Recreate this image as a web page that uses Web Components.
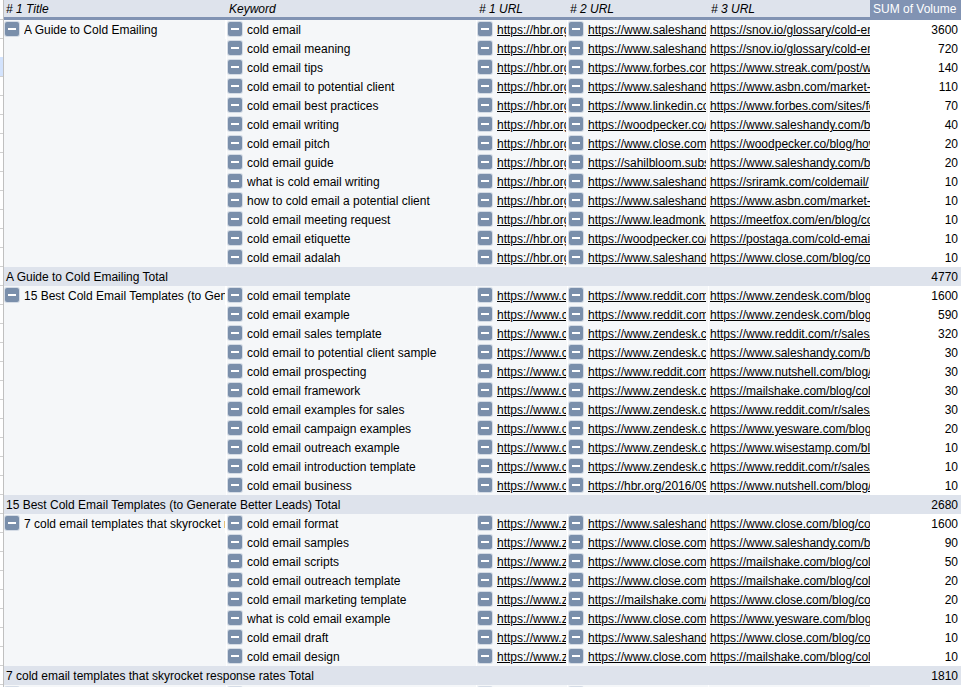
<!DOCTYPE html>
<html>
<head>
<meta charset="utf-8">
<title>Pivot table</title>
<style>
  html, body { margin: 0; height: 100%; overflow: hidden; background: #fff; }
  body { font: 12px "Liberation Sans", Arial, sans-serif; color: #000; }
</style>
</head>
<body>
<pivot-sheet></pivot-sheet>

<script>
const COLUMNS = '223px 250px 91px 141px 161px 91px';

const DATA = [
  {
    title: 'A Guide to Cold Emailing', total: '4770',
    rows: [
      ['cold email', 'https://hbr.org/2015/01/how-to-write-a-cold-email', 'https://www.saleshandy.com/blog/cold-email', 'https://snov.io/glossary/cold-email/', '3600'],
      ['cold email meaning', 'https://hbr.org/2015/01/how-to-write-a-cold-email', 'https://www.saleshandy.com/blog/cold-email', 'https://snov.io/glossary/cold-email/', '720'],
      ['cold email tips', 'https://hbr.org/2015/01/how-to-write-a-cold-email', 'https://www.forbes.com/sites/', 'https://www.streak.com/post/write-cold-email', '140'],
      ['cold email to potential client', 'https://hbr.org/2015/01/how-to-write-a-cold-email', 'https://www.saleshandy.com/blog/cold-email', 'https://www.asbn.com/market-research', '110'],
      ['cold email best practices', 'https://hbr.org/2015/01/how-to-write-a-cold-email', 'https://www.linkedin.com/pulse/', 'https://www.forbes.com/sites/forbes', '70'],
      ['cold email writing', 'https://hbr.org/2015/01/how-to-write-a-cold-email', 'https://woodpecker.co/blog/', 'https://www.saleshandy.com/blog/cold-email', '40'],
      ['cold email pitch', 'https://hbr.org/2015/01/how-to-write-a-cold-email', 'https://www.close.com/blog/', 'https://woodpecker.co/blog/how-to-pitch', '20'],
      ['cold email guide', 'https://hbr.org/2015/01/how-to-write-a-cold-email', 'https://sahilbloom.substack.com/', 'https://www.saleshandy.com/blog/cold-email', '20'],
      ['what is cold email writing', 'https://hbr.org/2015/01/how-to-write-a-cold-email', 'https://www.saleshandy.com/blog/', 'https://sriramk.com/coldemail/', '10'],
      ['how to cold email a potential client', 'https://hbr.org/2015/01/how-to-write-a-cold-email', 'https://www.saleshandy.com/blog/', 'https://www.asbn.com/market-research', '10'],
      ['cold email meeting request', 'https://hbr.org/2015/01/how-to-write-a-cold-email', 'https://www.leadmonk.io/post/', 'https://meetfox.com/en/blog/cold-email', '10'],
      ['cold email etiquette', 'https://hbr.org/2015/01/how-to-write-a-cold-email', 'https://woodpecker.co/blog/', 'https://postaga.com/cold-email-etiquette', '10'],
      ['cold email adalah', 'https://hbr.org/2015/01/how-to-write-a-cold-email', 'https://www.saleshandy.com/blog/', 'https://www.close.com/blog/cold-email', '10']
    ]
  },
  {
    title: '15 Best Cold Email Templates (to Generate Better Leads)', total: '2680',
    rows: [
      ['cold email template', 'https://www.copy.ai/', 'https://www.reddit.com/r/sales', 'https://www.zendesk.com/blog/cold-email', '1600'],
      ['cold email example', 'https://www.copy.ai/', 'https://www.reddit.com/r/sales', 'https://www.zendesk.com/blog/cold-email', '590'],
      ['cold email sales template', 'https://www.copy.ai/', 'https://www.zendesk.com/blog/', 'https://www.reddit.com/r/sales/comments', '320'],
      ['cold email to potential client sample', 'https://www.copy.ai/', 'https://www.zendesk.com/blog/', 'https://www.saleshandy.com/blog/cold-email', '30'],
      ['cold email prospecting', 'https://www.copy.ai/', 'https://www.reddit.com/r/sales', 'https://www.nutshell.com/blog/cold-email', '30'],
      ['cold email framework', 'https://www.copy.ai/', 'https://www.zendesk.com/blog/', 'https://mailshake.com/blog/cold-email', '30'],
      ['cold email examples for sales', 'https://www.copy.ai/', 'https://www.zendesk.com/blog/', 'https://www.reddit.com/r/sales/comments', '30'],
      ['cold email campaign examples', 'https://www.copy.ai/', 'https://www.zendesk.com/blog/', 'https://www.yesware.com/blog/cold-email', '20'],
      ['cold email outreach example', 'https://www.copy.ai/', 'https://www.zendesk.com/blog/', 'https://www.wisestamp.com/blog/cold', '10'],
      ['cold email introduction template', 'https://www.copy.ai/', 'https://www.zendesk.com/blog/', 'https://www.reddit.com/r/sales/comments', '10'],
      ['cold email business', 'https://www.copy.ai/', 'https://hbr.org/2016/09/cold-email', 'https://www.nutshell.com/blog/cold-email', '10']
    ]
  },
  {
    title: '7 cold email templates that skyrocket response rates', total: '1810',
    rows: [
      ['cold email format', 'https://www.zendesk.com/', 'https://www.saleshandy.com/blog/', 'https://www.close.com/blog/cold-email', '1600'],
      ['cold email samples', 'https://www.zendesk.com/', 'https://www.close.com/blog/', 'https://www.saleshandy.com/blog/cold-email', '90'],
      ['cold email scripts', 'https://www.zendesk.com/', 'https://www.close.com/blog/', 'https://mailshake.com/blog/cold-email', '50'],
      ['cold email outreach template', 'https://www.zendesk.com/', 'https://www.close.com/blog/', 'https://mailshake.com/blog/cold-email', '20'],
      ['cold email marketing template', 'https://www.zendesk.com/', 'https://mailshake.com/blog/', 'https://www.close.com/blog/cold-email', '20'],
      ['what is cold email example', 'https://www.zendesk.com/', 'https://www.close.com/blog/', 'https://www.yesware.com/blog/cold-email', '10'],
      ['cold email draft', 'https://www.zendesk.com/', 'https://www.saleshandy.com/blog/', 'https://www.close.com/blog/cold-email', '10'],
      ['cold email design', 'https://www.zendesk.com/', 'https://www.close.com/blog/', 'https://mailshake.com/blog/cold-email', '10']
    ]
  }
];

class CollapseCell extends HTMLElement {
  constructor() {
    super();
    const shadow = this.attachShadow({ mode: 'open' });
    shadow.innerHTML = `
    <style>
      :host {
        display: flex;
        align-items: flex-start;
        min-width: 0;
        height: 19px;
        overflow: hidden;
        white-space: nowrap;
        background: #f5f7f9;
        border-right: 1px solid #fff;
        box-sizing: border-box;
      }
      .btn {
        flex: none;
        width: 14px;
        height: 14px;
        margin: 2px 5px 0 1px;
        border-radius: 2px;
        background: #7a8fab;
        box-shadow: 0 0 0 1px #d5dce6;
        display: flex;
        align-items: center;
        justify-content: center;
      }
      .btn::before {
        content: '';
        width: 8px;
        height: 2px;
        background: #fff;
      }
      .text {
        flex: 1;
        min-width: 0;
        height: 19px;
        margin-right: var(--clip-gap, 0);
        overflow: hidden;
        line-height: 21px;
      }
    </style>
    <span class="btn"></span><span class="text"><slot></slot></span>
    `;
  }
}

class UrlLink extends HTMLElement {
  constructor() {
    super();
    const shadow = this.attachShadow({ mode: 'open' });
    shadow.innerHTML = `
    <style>
      :host { text-decoration: underline; color: #000; }
    </style>
    <slot></slot>
    `;
  }
}

class PlainUrlCell extends HTMLElement {
  constructor() {
    super();
    const shadow = this.attachShadow({ mode: 'open' });
    shadow.innerHTML = `
    <style>
      :host {
        display: block;
        min-width: 0;
        height: 19px;
        padding-left: 1px;
        line-height: 21px;
        overflow: hidden;
        white-space: nowrap;
        background: #f5f7f9;
      }
    </style>
    <slot></slot>
    `;
  }
}

class VolumeCell extends HTMLElement {
  constructor() {
    super();
    const shadow = this.attachShadow({ mode: 'open' });
    shadow.innerHTML = `
    <style>
      :host {
        display: block;
        height: 19px;
        padding-right: 3px;
        line-height: 21px;
        text-align: right;
        background: #fff;
      }
    </style>
    <slot></slot>
    `;
  }
}

class PivotRow extends HTMLElement {
  constructor() {
    super();
    const shadow = this.attachShadow({ mode: 'open' });
    shadow.innerHTML = `
    <style>
      :host {
        display: grid;
        grid-column: 1 / -1;
        grid-template-columns: subgrid;
        height: 19px;
      }
      ::slotted(.url1) { --clip-gap: 1px; }
      ::slotted(.url2) { --clip-gap: 2px; }
    </style>
    <slot></slot>
    `;
  }

  set data(row) {
    const [keyword, url1, url2, url3, volume] = row;
    const addCell = (tag, text, linked, className) => {
      const cell = document.createElement(tag);
      if (className) cell.className = className;
      if (linked) {
        const link = document.createElement('url-link');
        link.textContent = text;
        cell.appendChild(link);
      } else {
        cell.textContent = text;
      }
      this.appendChild(cell);
    };
    addCell('collapse-cell', keyword);
    addCell('collapse-cell', url1, true, 'url1');
    addCell('collapse-cell', url2, true, 'url2');
    addCell('plain-url-cell', url3, true);
    addCell('volume-cell', volume);
  }
}

class PivotGroup extends HTMLElement {
  constructor() {
    super();
    const shadow = this.attachShadow({ mode: 'open' });
    shadow.innerHTML = `
    <style>
      :host {
        display: grid;
        grid-template-columns: ${COLUMNS};
      }
      .title {
        grid-column: 1;
        min-width: 0;
        background: #f5f7f9;
        border-right: 1px solid #fff;
      }
      .rows {
        display: grid;
        grid-column: 2 / 7;
        grid-template-columns: subgrid;
      }
      .total {
        grid-column: 1 / 7;
        display: flex;
        justify-content: space-between;
        height: 19px;
        padding: 0 3px 0 2px;
        line-height: 21px;
        background: #dee3ec;
      }
    </style>
    <div class="title"><collapse-cell id="title"></collapse-cell></div>
    <div class="rows"><slot></slot></div>
    <div class="total"><span id="label"></span><span id="sum"></span></div>
    `;
  }

  set data(group) {
    this.shadowRoot.getElementById('title').textContent = group.title;
    this.shadowRoot.getElementById('label').textContent = group.title + ' Total';
    this.shadowRoot.getElementById('sum').textContent = group.total;
    group.rows.forEach((row) => {
      const item = document.createElement('pivot-row');
      this.appendChild(item);
      item.data = row;
    });
  }
}

class SheetGutter extends HTMLElement {
  constructor() {
    super();
    const shadow = this.attachShadow({ mode: 'open' });
    shadow.innerHTML = `
    <style>
      :host {
        display: block;
        flex: none;
        width: 3px;
        height: 687px;
        border-right: 1px solid #c0c0c0;
        background:
          linear-gradient(#d3e3fd, #d3e3fd) 0 57px / 100% 19px no-repeat,
          repeating-linear-gradient(#fff 0 18px, #d0d0d0 18px 19px) 0 1px;
      }
    </style>
    `;
  }
}

class PivotSheet extends HTMLElement {
  constructor() {
    super();
    const shadow = this.attachShadow({ mode: 'open' });
    shadow.innerHTML = `
    <style>
      :host {
        display: flex;
        height: 687px;
        overflow: hidden;
      }
      .table { width: 957px; flex: none; }
      .head {
        display: grid;
        grid-template-columns: ${COLUMNS};
        height: 17px;
        line-height: 18px;
        font-style: italic;
        background: #dee3ec;
        border-bottom: 3px solid #8193b3;
      }
      .head span { padding-left: 2px; white-space: nowrap; }
      .head .sum {
        height: 20px;
        margin-bottom: -3px;
        padding-left: 3px;
        line-height: 18px;
        font-style: normal;
        color: #fff;
        background: #8193b3;
      }
      .next {
        display: grid;
        grid-template-columns: ${COLUMNS};
        height: 2px;
        overflow: hidden;
        background: #f5f7f9;
      }
    </style>
    <sheet-gutter></sheet-gutter>
    <div class="table">
      <div class="head">
        <span># 1 Title</span>
        <span>Keyword</span>
        <span># 1 URL</span>
        <span># 2 URL</span>
        <span># 3 URL</span>
        <span class="sum">SUM of Volume</span>
      </div>
      <div id="groups"></div>
      <div class="next">
        <collapse-cell></collapse-cell>
        <collapse-cell></collapse-cell>
        <collapse-cell></collapse-cell>
        <collapse-cell></collapse-cell>
        <plain-url-cell></plain-url-cell>
        <volume-cell></volume-cell>
      </div>
    </div>
    `;
    const groups = shadow.getElementById('groups');
    DATA.forEach((group) => {
      const el = document.createElement('pivot-group');
      groups.appendChild(el);
      el.data = group;
    });
  }
}

customElements.define('collapse-cell', CollapseCell);
customElements.define('url-link', UrlLink);
customElements.define('plain-url-cell', PlainUrlCell);
customElements.define('volume-cell', VolumeCell);
customElements.define('pivot-row', PivotRow);
customElements.define('pivot-group', PivotGroup);
customElements.define('sheet-gutter', SheetGutter);
customElements.define('pivot-sheet', PivotSheet);
</script>
</body>
</html>
